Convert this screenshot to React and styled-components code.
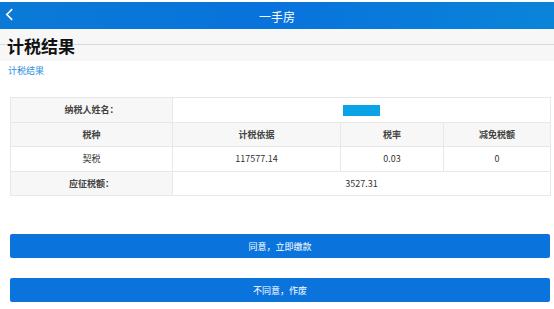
import styled, { createGlobalStyle } from 'styled-components';

const GlobalStyle = createGlobalStyle`
  body {
    margin: 0;
    background: #fff;
    font-family: "Noto Sans CJK SC", "Liberation Sans", sans-serif;
  }
`;

export default function App() {
  return (
    <Page>
      <GlobalStyle />
      <Header>
        <BackIcon viewBox="0 0 10 14">
          <path d="M8 1 L2 7 L8 13" fill="none" stroke="#fff" strokeWidth="1.8" />
        </BackIcon>
        <HeaderTitle>一手房</HeaderTitle>
      </Header>
      <SectionBar>
        <SectionTitle>计税结果</SectionTitle>
        <SectionLine />
      </SectionBar>
      <SubTitle>计税结果</SubTitle>
      <Table>
        <colgroup>
          <col style={{ width: 162 }} />
          <col style={{ width: 168 }} />
          <col style={{ width: 103 }} />
          <col style={{ width: 107 }} />
        </colgroup>
        <tbody>
          <tr>
            <Cell $label>纳税人姓名：</Cell>
            <Cell colSpan={3}>
              <NameMask />
            </Cell>
          </tr>
          <tr>
            <Cell $label>税种</Cell>
            <Cell $label>计税依据</Cell>
            <Cell $label>税率</Cell>
            <Cell $label>减免税额</Cell>
          </tr>
          <tr>
            <Cell>契税</Cell>
            <Cell>117577.14</Cell>
            <Cell>0.03</Cell>
            <Cell>0</Cell>
          </tr>
          <tr>
            <Cell $label>应征税额：</Cell>
            <Cell colSpan={3}>3527.31</Cell>
          </tr>
        </tbody>
      </Table>
      <Buttons>
        <Button>同意，立即缴款</Button>
        <Button>不同意，作废</Button>
      </Buttons>
    </Page>
  );
}

const Page = styled.div`
  width: 554px;
  height: 309px;
  overflow: hidden;
  padding-top: 2px;
  box-sizing: border-box;
  background: #fff;
`;

const Header = styled.div`
  position: relative;
  height: 27px;
  background: linear-gradient(90deg, #0a7ad6 0%, #0873dc 50%, #0a84d9 100%);
  display: flex;
  align-items: center;
  justify-content: center;
`;

const BackIcon = styled.svg`
  position: absolute;
  left: 5px;
  top: 6px;
  width: 9px;
  height: 13px;
`;

const HeaderTitle = styled.div`
  color: #fff;
  font-size: 12px;
  margin-top: 1px;
`;

const SectionBar = styled.div`
  height: 32px;
  background: #f7f7f7;
  display: flex;
  align-items: center;
  position: relative;
`;

const SectionTitle = styled.div`
  font-size: 17px;
  font-weight: bold;
  color: #111;
  padding-left: 7px;
  padding-top: 1px;
  position: relative;
  z-index: 1;
`;

const SectionLine = styled.div`
  position: absolute;
  left: 0;
  right: 0;
  top: 15px;
  height: 1px;
  background: #d9d9d9;
`;

const SubTitle = styled.div`
  font-size: 9px;
  color: #2a8ee0;
  padding: 3px 0 0 8px;
  height: 36px;
  box-sizing: border-box;
`;

const Table = styled.table`
  margin-left: 10px;
  width: 540px;
  border-collapse: collapse;
  table-layout: fixed;
  font-size: 9px;
  color: #333;
`;

const Cell = styled.td`
  height: 23.5px;
  padding: 0;
  border: 1px solid #e8e8e8;
  text-align: center;
  background: ${(p) => (p.$label ? '#f7f7f7' : '#fff')};
  font-weight: ${(p) => (p.$label ? 'bold' : 'normal')};
  color: ${(p) => (p.$label ? '#444' : '#333')};
  vertical-align: middle;
`;

const NameMask = styled.span`
  display: inline-block;
  width: 37px;
  height: 11px;
  background: #0aa3e8;
  vertical-align: middle;
`;

const Buttons = styled.div`
  padding: 38px 4px 0 10px;
  display: flex;
  flex-direction: column;
  gap: 20px;
`;

const Button = styled.button`
  height: 24px;
  width: 540px;
  border: 0;
  border-radius: 2px;
  background: #0a74dc;
  color: #fff;
  font-size: 9px;
  font-family: inherit;
  padding: 0;
`;
